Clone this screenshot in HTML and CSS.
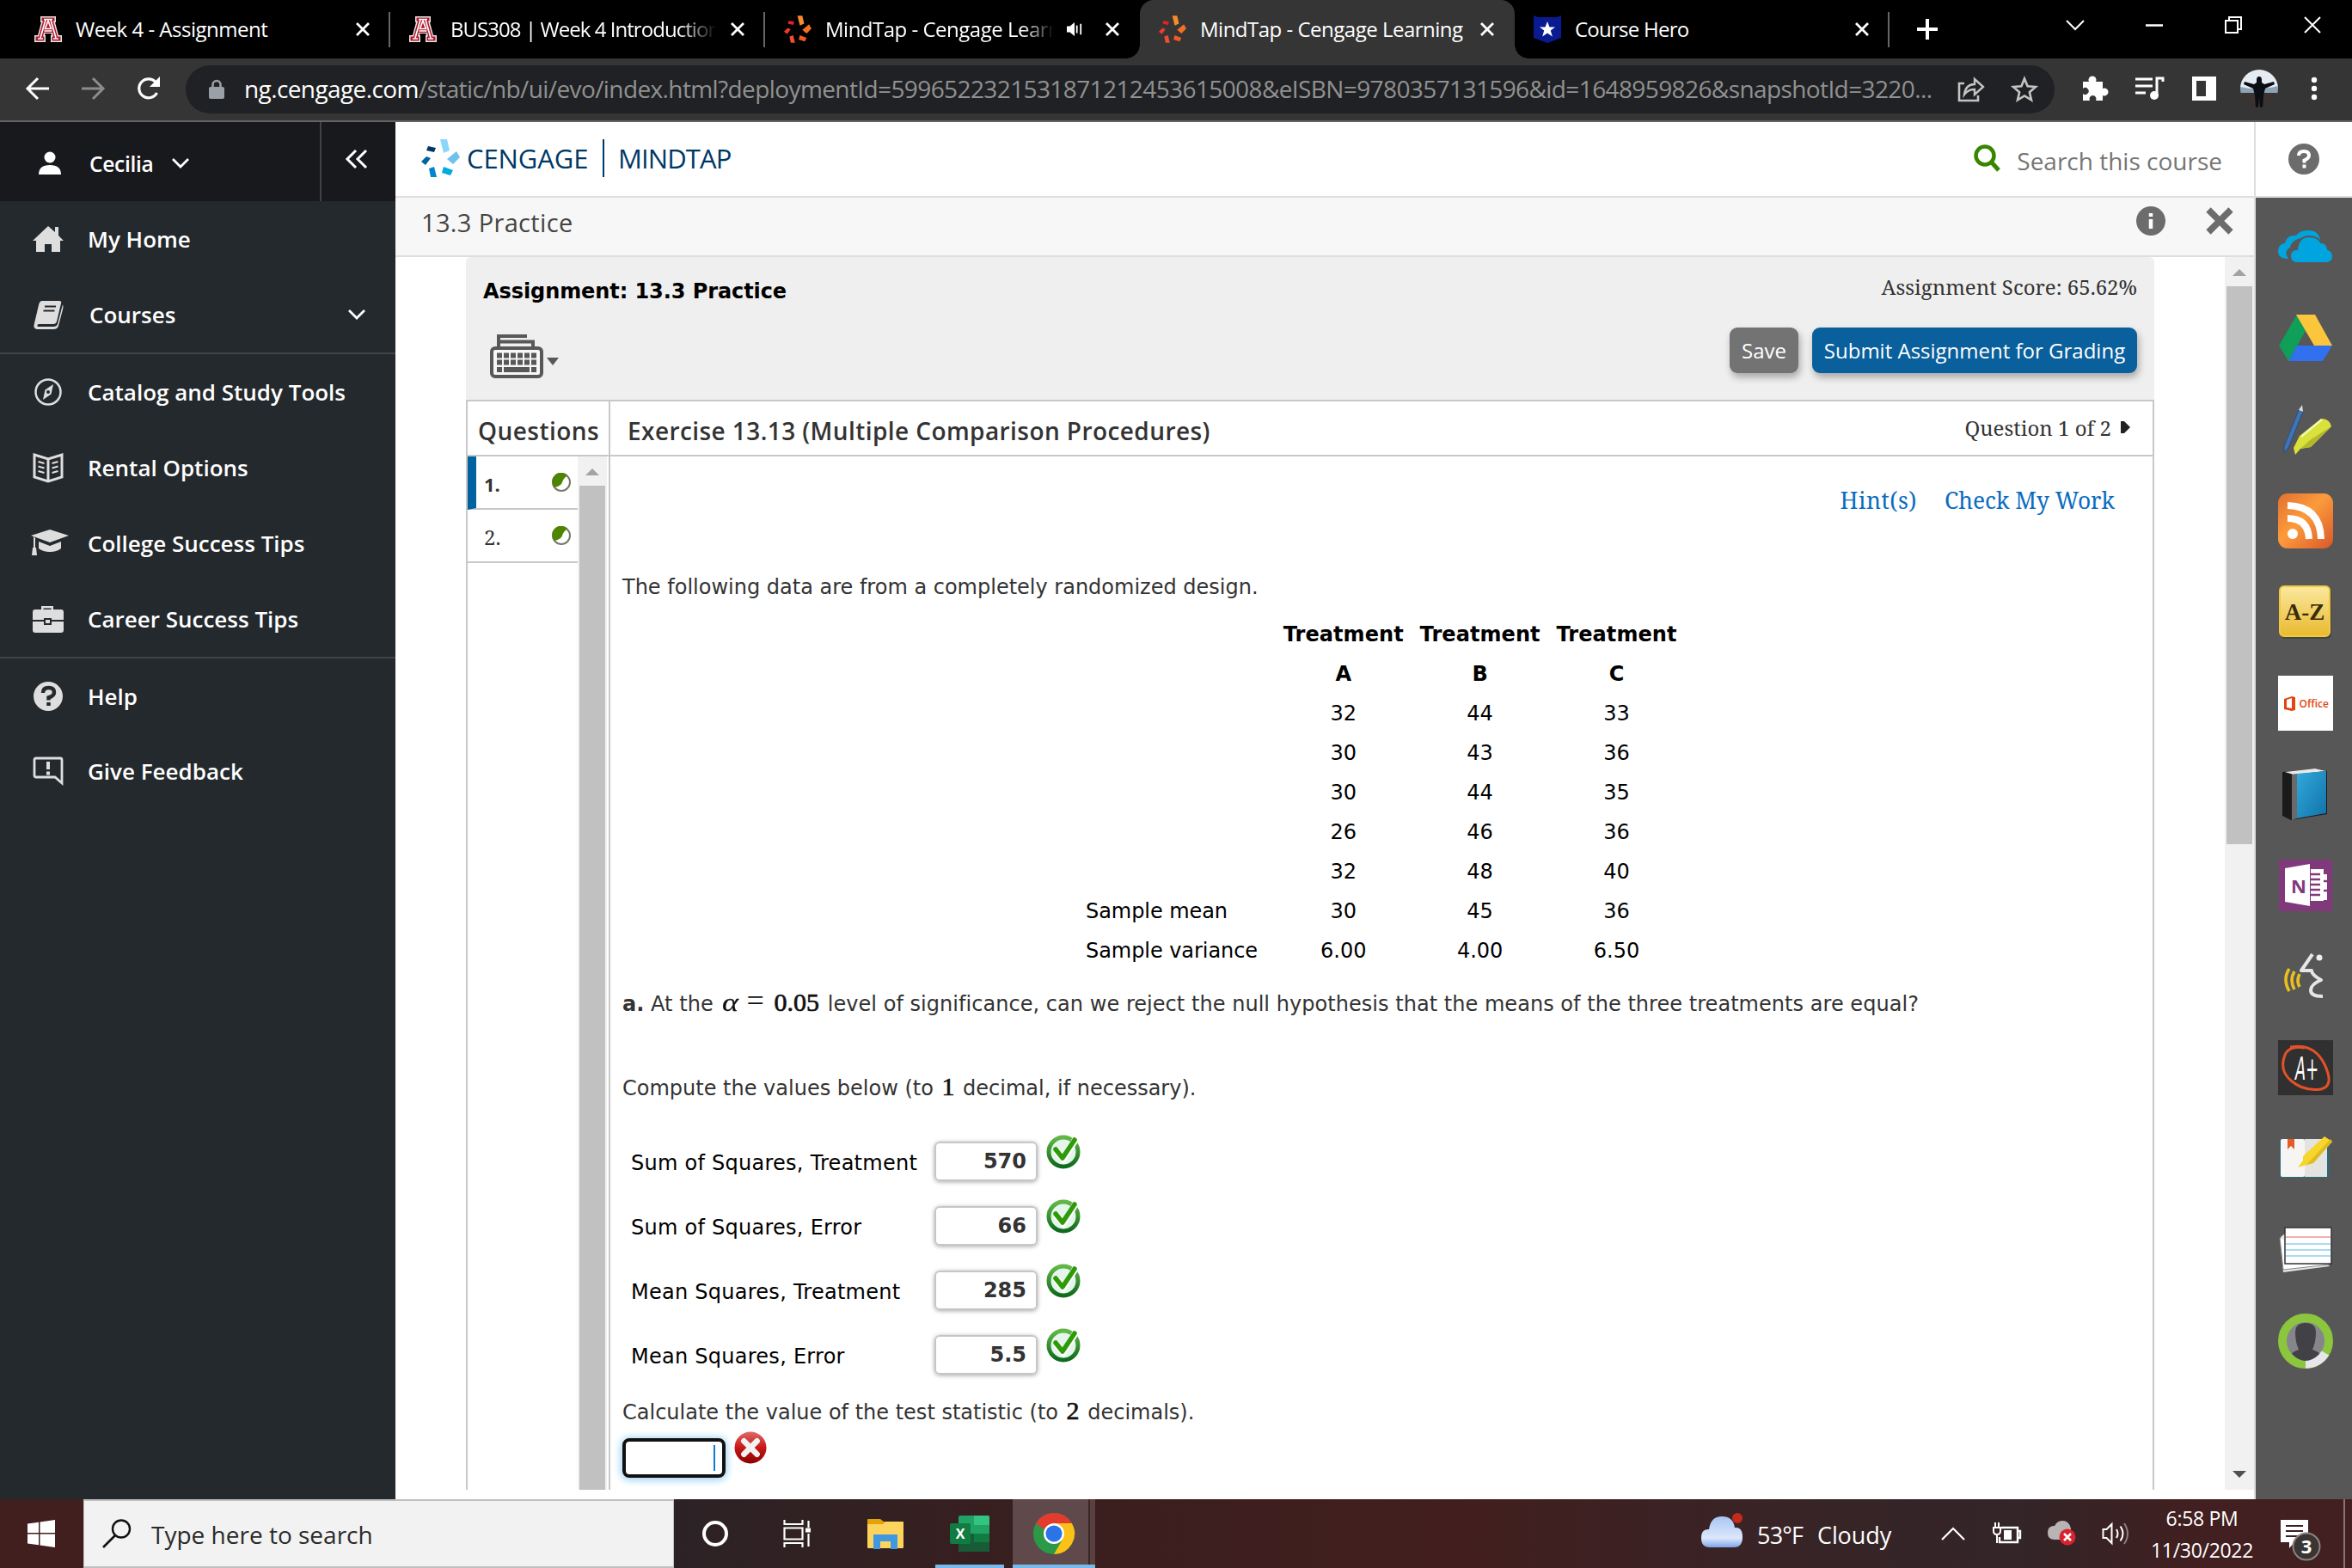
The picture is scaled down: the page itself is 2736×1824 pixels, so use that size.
FILE: index.html
```html
<!DOCTYPE html>
<html lang="en">
<head>
<meta charset="utf-8">
<title>MindTap - Cengage Learning</title>
<link rel="stylesheet" href="styles.css">
</head>
<body>
<svg class="defs" aria-hidden="true">
  <defs>
    <linearGradient id="gOrange" x1="0" y1="0" x2="1" y2="1"><stop offset="0" stop-color="#e2702f"/><stop offset=".45" stop-color="#fc9b3c"/><stop offset="1" stop-color="#d8572a"/></linearGradient>
    <linearGradient id="gGold" x1="0" y1="0" x2="0" y2="1"><stop offset="0" stop-color="#fbe9a0"/><stop offset="1" stop-color="#e9b92f"/></linearGradient>
    <linearGradient id="gBook" x1="0" y1="0" x2="1" y2="1"><stop offset="0" stop-color="#31a9dc"/><stop offset="1" stop-color="#1272a8"/></linearGradient>
    <linearGradient id="gOk" x1="0" y1="0" x2="0" y2="1"><stop offset="0" stop-color="#62b847"/><stop offset="1" stop-color="#0f6a1c"/></linearGradient>
    <linearGradient id="gBad" x1="0" y1="0" x2="0" y2="1"><stop offset="0" stop-color="#e06a6a"/><stop offset=".5" stop-color="#c81818"/><stop offset="1" stop-color="#8c0000"/></linearGradient>
    <linearGradient id="gCloud" x1="0" y1="0" x2="0" y2="1"><stop offset="0" stop-color="#a9c4f3"/><stop offset=".7" stop-color="#dce8fb"/><stop offset="1" stop-color="#7ea4ea"/></linearGradient>
  </defs>
  <symbol id="uofa" viewBox="0 0 32 30"><path fill="#e8e8e8" d="M7 0h18v7h-1l4 15h4v8H19v-8h1l-.5-2h-7l-.5 2h1v8H0v-8h4L8 7H7z"/><path fill="#b0182b" d="M8.5 1.500h15v4h-1.500l5 18h3.500v5H20.500v-5h1.500l-1-4.500H11l-1 4.500h1.500v5H1.500v-5H5l5-18H8.500z"/><path fill="none" stroke="#fff" stroke-width="1.700" d="M11 3.500h10M4 26h6M22 26h6M7 25l6-21M25 25L19 4M11.500 17h9M12.500 14.500L16 5l3.500 9.500z"/></symbol>
  <symbol id="burst" viewBox="0 0 45 44"><path class="b1" d="M22 0h8l3 13-7 3z"/><path class="b2" d="M30 23l11-9 4 7-8 8z"/><path class="b3" d="M26 32l11 4-3 6-10-3z"/><path class="b4" d="M9 34l6-2 3 12h-7z"/><path class="b5" d="M0 26l6-6 5 2-6 8z"/><path class="b6" d="M8 8l9 2-2 5-9-2z"/></symbol>
  <symbol id="x" viewBox="0 0 18 18"><path d="M2 2l14 14M16 2L2 16" fill="none" stroke="currentColor" stroke-width="2.800"/></symbol>
  <symbol id="check" viewBox="0 0 40 40"><circle cx="20" cy="20" r="17" fill="#e4f6ec" stroke="url(#gOk)" stroke-width="5"/><path d="M11 18l9 10L35 4" fill="none" stroke="#fff" stroke-width="8"/><path d="M11 17l8 10L33 6" fill="none" stroke="#2f9a08" stroke-width="5.500" stroke-linecap="round" stroke-linejoin="round"/></symbol>
  <symbol id="half" viewBox="0 0 22 22"><circle cx="11" cy="11" r="10" fill="#fff" stroke="#77776a" stroke-width="2"/><path d="M18 3A10 10 0 0 0 3 17Q11 15 12 11T18 3z" fill="#4f8400"/></symbol>
</svg>

<header class="tabs">
  <div class="tab"><svg class="fav"><use href="#uofa"/></svg><span class="tt">Week 4 - Assignment</span><svg class="tx"><use href="#x"/></svg></div>
  <div class="tab"><svg class="fav"><use href="#uofa"/></svg><span class="tt fade">BUS308 | Week 4 Introduction</span><svg class="tx"><use href="#x"/></svg></div>
  <div class="tab noline"><svg class="fav orange"><use href="#burst"/></svg><span class="tt fade">MindTap - Cengage Learn</span><svg class="snd" viewBox="0 0 20 20"><path d="M0 6h4l6-5v18l-6-5H0z" fill="#fff"/><path d="M13 5v10M18 3v14" stroke="#fff" stroke-width="2"/></svg><svg class="tx"><use href="#x"/></svg></div>
  <div class="tab active"><svg class="fav orange"><use href="#burst"/></svg><span class="tt">MindTap - Cengage Learning</span><svg class="tx"><use href="#x"/></svg></div>
  <div class="tab"><svg class="fav" viewBox="0 0 32 32"><path d="M0 0l5 2h22l5-2v26L16 32 0 26z" fill="#0a1b92"/><path d="M16 7l2.500 6.500h6.500l-5.200 4 2 7L16 20.500 10.200 24.500l2-7-5.200-4h6.500z" fill="#fff"/></svg><span class="tt hero">Course Hero</span><svg class="tx"><use href="#x"/></svg></div>
  <div class="newtab"><svg width="24" height="24"><path d="M12 0v24M0 12h24" stroke="#fff" stroke-width="4"/></svg></div>
  <div class="winctl">
    <span><svg width="22" height="12"><path d="M1 1l10 10L21 1" fill="none" stroke="#fff" stroke-width="2"/></svg></span>
    <span><svg width="20" height="3"><path d="M0 1.500h20" stroke="#fff" stroke-width="2.500"/></svg></span>
    <span><svg width="20" height="20"><path d="M1 5h14v14H1zM5 5V1h14v14h-4" fill="none" stroke="#fff" stroke-width="2"/></svg></span>
    <span><svg width="20" height="20"><path d="M1 1l18 18M19 1L1 19" stroke="#fff" stroke-width="2"/></svg></span>
  </div>
</header>

<div class="toolbar">
  <span class="tb"><svg width="28" height="26"><path d="M14 1L2 13l12 12M2 13h25" fill="none" stroke="#fff" stroke-width="3"/></svg></span>
  <span class="tb"><svg width="28" height="26"><path d="M14 1l12 12-12 12M26 13H1" fill="none" stroke="#8c8c8c" stroke-width="3"/></svg></span>
  <span class="tb"><svg width="28" height="28"><path d="M24.500 19A11 11 0 1 1 23 6.500" fill="none" stroke="#fff" stroke-width="3.200"/><path d="M28 0v12H16z" fill="#fff"/></svg></span>
  <div class="url">
    <svg class="lock" width="18" height="22"><rect x="0" y="8" width="18" height="14" rx="2" fill="#9aa0a6"/><path d="M4.500 9V5.500a4.500 4.500 0 0 1 9 0V9" fill="none" stroke="#9aa0a6" stroke-width="2.600"/></svg>
    <span class="addr"><b>ng.cengage.com</b>/static/nb/ui/evo/index.html?deploymentId=5996522321531871212453615008&amp;eISBN=9780357131596&amp;id=1648959826&amp;snapshotId=3220...</span>
    <svg width="32" height="30"><path d="M8 8H2v20h22v-6" fill="none" stroke="#c4c4c4" stroke-width="2.600"/><path d="M8 21c1-8 5-12 12-12V3l10 9-10 9v-6c-6 0-9 2-12 6z" fill="none" stroke="#c4c4c4" stroke-width="2.400"/></svg>
    <svg class="star" width="30" height="30"><path d="M15 2.500l3.600 8.700 9.400.8-7.100 6.200 2.100 9.200L15 22.500 7 27.400l2.100-9.200L2 12l9.400-.8z" fill="none" stroke="#c4c4c4" stroke-width="2.600"/></svg>
  </div>
  <span class="tb"><svg width="30" height="30"><path d="M2 7h7a4.500 4.500 0 1 1 8 0h8v8a4.500 4.500 0 1 1 0 8v6h-8a4 4 0 1 0-7 0H2v-8a4 4 0 1 0 0-6z" fill="#fff"/></svg></span>
  <span class="tb"><svg width="32" height="28"><path d="M0 3h20M0 11h20M0 19h12" stroke="#fff" stroke-width="3"/><path d="M25 22V2h7v4" fill="none" stroke="#fff" stroke-width="3"/><circle cx="22" cy="22" r="5" fill="#fff"/></svg></span>
  <span class="tb"><svg width="28" height="28"><path d="M0 0h28v28H0zM5 5v18h11V5z" fill="#fff" fill-rule="evenodd"/></svg></span>
  <span class="tb"><svg width="44" height="44"><clipPath id="av"><circle cx="22" cy="22" r="22"/></clipPath><g clip-path="url(#av)"><rect width="44" height="22" fill="#e6edf2"/><path d="M0 20q20 5 44-1v10H0z" fill="#8ba4b6"/><rect y="27" width="44" height="17" fill="#3a3331"/><path d="M22 8q3 0 3 4v3l3 2 11-3 1 3-11 5-2 8-1 14h-3l-1-12-1 12h-3l-1-14-2-8-11-5 1-3 11 3 3-2v-3q0-4 3-4z" fill="#0b0d14"/></g></svg></span>
  <span class="tb"><svg width="8" height="28"><circle cx="4" cy="4" r="3.200" fill="#fff"/><circle cx="4" cy="14" r="3.200" fill="#fff"/><circle cx="4" cy="24" r="3.200" fill="#fff"/></svg></span>
</div>

<main class="page">
  <nav class="side">
    <div class="user">
      <div class="who"><svg class="ni" viewBox="0 0 40 40"><circle cx="22" cy="13" r="6.500" fill="#fff"/><path d="M9 33q0-11 13-11t13 11z" fill="#fff"/></svg><span class="cec">Cecilia</span><svg width="22" height="14"><path d="M2 2l9 9 9-9" fill="none" stroke="#fff" stroke-width="2.800"/></svg></div>
      <div class="fold"><svg width="28" height="24"><path d="M13 2L3 12l10 10M25 2L15 12l10 10" fill="none" stroke="#fff" stroke-width="3"/></svg></div>
    </div>
    <div class="grp">
      <div class="nav"><svg class="ni" viewBox="0 0 40 40"><path d="M20 5L2 22h4v13h10v-9h8v9h10V22h4l-6-6V6h-4v6z" fill="#dedede"/></svg><span>My Home</span></div>
      <div class="nav"><svg class="ni" viewBox="0 0 40 40"><path d="M13 4h20q3 0 2 3l-5 21q-1 3-4 3H10q-4 0-2 3h18q4 0 5-3l6-23q1 3 0 6l-5 19q-1 4-6 4H7q-5-1-3-7l5-21q1-5 4-5z" fill="#dedede"/><path d="M16 10.500h13M14.500 15.500h13" stroke="#24292d" stroke-width="2.200"/></svg><span class="crs">Courses</span><svg class="more" width="22" height="14"><path d="M2 2l9 9 9-9" fill="none" stroke="#fff" stroke-width="2.800"/></svg></div>
    </div>
    <div class="grp g2">
      <div class="nav"><svg class="ni" viewBox="0 0 40 40"><circle cx="20" cy="20" r="14.500" fill="none" stroke="#dedede" stroke-width="2.500"/><path d="M26 11l-2.500 11.500L14 29l2.500-11.500z" fill="#dedede"/><circle cx="20" cy="20" r="2" fill="#24292d"/></svg><span>Catalog and Study Tools</span></div>
      <div class="nav"><svg class="ni" viewBox="0 0 40 40"><path d="M4 5l16 5 16-5v26l-16 5-16-5zM20 10v26" fill="none" stroke="#dedede" stroke-width="3"/><path d="M8.500 13l7 2M8.500 18.500l7 2M8.500 24l7 2M31.500 13l-7 2M31.500 18.500l-7 2M31.500 24l-7 2" stroke="#dedede" stroke-width="2"/></svg><span>Rental Options</span></div>
      <div class="nav"><svg class="ni cap" viewBox="0 0 48 40"><path d="M25 4l22 7-22 8L3 11z" fill="#dedede"/><path d="M12 18l13 5 13-5v8q-5 4-13 4t-13-4zM6 12v13H5l-1 9h6l-1-9H8V14z" fill="#dedede"/></svg><span>College Success Tips</span></div>
      <div class="nav"><svg class="ni" viewBox="0 0 40 40"><path d="M12 9V5h14v4h9q3 0 3 3v9H24v-2h-9v2H2v-9q0-3 3-3zM14.500 9h9V7.500h-9zM2 23h13v4h9v-4h14v10q0 3-3 3H5q-3 0-3-3zM17 21h5v4h-5z" fill="#dedede" fill-rule="evenodd"/></svg><span>Career Success Tips</span></div>
    </div>
    <div class="grp g3">
      <div class="nav"><svg class="ni" viewBox="0 0 40 40"><circle cx="20" cy="20" r="17" fill="#dedede"/><path d="M14 16q0-6 6.500-6t6.500 5.500q0 4-6.500 6v3M20.500 27v4" fill="none" stroke="#24292d" stroke-width="4.500"/></svg><span>Help</span></div>
      <div class="nav"><svg class="ni" viewBox="0 0 40 40"><path d="M6 5h28q2 0 2 2v27l-8-7H6q-2 0-2-2V7q0-2 2-2z" fill="none" stroke="#dedede" stroke-width="2.800"/><path d="M20 9v9M20 20.500v4" stroke="#dedede" stroke-width="4"/></svg><span>Give Feedback</span></div>
    </div>
  </nav>

  <section class="center">
    <header class="brand">
      <svg class="logo"><use href="#burst"/></svg><span class="cg">CENGAGE</span><i></i><span class="mt">MINDTAP</span>
      <div class="search"><svg width="32" height="32"><circle cx="13" cy="13" r="10.500" fill="none" stroke="#388600" stroke-width="4.500"/><path d="M20 20l9 10" stroke="#388600" stroke-width="5"/></svg><span>Search this course</span></div>
    </header>
    <div class="crumb"><span>13.3 Practice</span>
      <svg width="34" height="34"><circle cx="17" cy="17" r="17" fill="#6c6c6c"/><path d="M17 8v4M17 15v11" stroke="#fff" stroke-width="4.500"/></svg>
      <svg class="cx" width="32" height="32"><path d="M3 3l26 26M29 3L3 29" stroke="#6c6c6c" stroke-width="7.500"/></svg>
    </div>
    <div class="frame">
      <div class="sheet">
        <div class="ahead">
          <div class="row1"><h1>Assignment: 13.3 Practice</h1><span class="score">Assignment Score: 65.62%</span></div>
          <div class="row2">
            <svg width="84" height="54"><path d="M10 16V3h33M10 9.500h40v8" fill="none" stroke="#585858" stroke-width="4"/><rect x="2" y="17" width="58" height="33" rx="4" fill="#f7f7f7" stroke="#585858" stroke-width="4"/><path d="M8 25.500h46M8 33.500h46" stroke="#585858" stroke-width="6" stroke-dasharray="6 2"/><path d="M8 42h6M16 42h30M48 42h6" stroke="#585858" stroke-width="6"/><path d="M66 28h14l-7 9z" fill="#585858"/></svg>
            <button class="btn save">Save</button><button class="btn">Submit Assignment for Grading</button>
          </div>
        </div>
        <div class="qa">
          <aside class="qlist">
            <h2>Questions</h2>
            <div class="qbody">
              <div class="qs">
                <div class="q on"><span>1.</span><svg class="ball"><use href="#half"/></svg></div>
                <div class="q"><span>2.</span><svg class="ball"><use href="#half"/></svg></div>
              </div>
              <div class="sb"><svg width="32" height="34"><path d="M8 22l8-8 8 8z" fill="#a3a3a3"/></svg><div class="thumb"></div></div>
            </div>
          </aside>
          <article class="ex">
            <div class="exh"><h2>Exercise 13.13 (Multiple Comparison Procedures)</h2><span>Question 1 of 2</span><svg width="12" height="16"><path d="M0 1l4 0 7 7-7 7-4 0z" fill="#222"/></svg></div>
            <div class="body">
              <div class="links"><a class="hint">Hint(s)</a><a>Check My Work</a></div>
              <p class="p1">The following data are from a completely randomized design.</p>
              <table>
                <tr><th></th><th>Treatment</th><th>Treatment</th><th>Treatment</th></tr>
                <tr><th></th><th>A</th><th>B</th><th>C</th></tr>
                <tr><td></td><td>32</td><td>44</td><td>33</td></tr>
                <tr><td></td><td>30</td><td>43</td><td>36</td></tr>
                <tr><td></td><td>30</td><td>44</td><td>35</td></tr>
                <tr><td></td><td>26</td><td>46</td><td>36</td></tr>
                <tr><td></td><td>32</td><td>48</td><td>40</td></tr>
                <tr><td>Sample mean</td><td>30</td><td>45</td><td>36</td></tr>
                <tr><td>Sample variance</td><td>6.00</td><td>4.00</td><td>6.50</td></tr>
              </table>
              <p class="p2"><b>a.</b> At the <span class="m"><em>α</em><s>=</s>0.05</span> level of significance, can we reject the null hypothesis that the means of the three treatments are equal?</p>
              <p class="p3">Compute the values below (to <span class="m">1</span> decimal, if necessary).</p>
              <div class="ans">
                <div class="a"><label>Sum of Squares, Treatment</label><div class="in">570</div><svg class="ok"><use href="#check"/></svg></div>
                <div class="a"><label>Sum of Squares, Error</label><div class="in">66</div><svg class="ok"><use href="#check"/></svg></div>
                <div class="a"><label>Mean Squares, Treatment</label><div class="in">285</div><svg class="ok"><use href="#check"/></svg></div>
                <div class="a"><label>Mean Squares, Error</label><div class="in">5.5</div><svg class="ok"><use href="#check"/></svg></div>
              </div>
              <p class="p4">Calculate the value of the test statistic (to <span class="m">2</span> decimals).</p>
              <div class="last"><div class="in focus"><i></i></div><svg width="38" height="38" viewBox="0 0 40 40"><circle cx="20" cy="20" r="19.500" fill="url(#gBad)"/><path d="M12 12l16 16M28 12L12 28" stroke="#f2f2f2" stroke-width="7" stroke-linecap="round"/></svg></div>
            </div>
          </article>
        </div>
      </div>
      <div class="sb main"><svg width="34" height="34"><path d="M9 22l8-8 8 8z" fill="#a3a3a3"/></svg><div class="thumb"></div><svg class="dn" width="34" height="34"><path d="M9 12h16l-8 8z" fill="#505050"/></svg></div>
    </div>
  </section>

  <aside class="rail">
    <div class="help"><svg width="36" height="36"><circle cx="18" cy="18" r="18" fill="#6c6c6c"/><path d="M12 14q0-5 6-5t6 5q0 3-5.500 5.500v3M18.500 24.500v4" fill="none" stroke="#fff" stroke-width="4"/></svg></div>
    <div class="apps">
      <span><svg viewBox="0 0 64 64"><g transform="translate(0 4)"><path d="M12 41q-12 0-12-9 0-8 8-9 2-10 13-9 4-6 14-6 12 0 14 11-6-3-12 0-6-4-14-1-8 3-9 10-8 4-2 13z" fill="#00a5e0"/><path d="M22 46q-8 0-8-8t8-8q2-15 14-15 10 0 14 7 7 0 8 8 6 2 6 8 0 8-8 8z" fill="#00a5e0" stroke="#575757" stroke-width="2"/></g></svg></span>
      <span><svg viewBox="0 0 64 64"><path d="M22 4l11 17-21 37L1 40z" fill="#0f9f58"/><path d="M21 4h22l20 36H42z" fill="#fbc63b"/><path d="M22 40h41L52 58H12z" fill="#3170ee"/></svg></span>
      <span><svg viewBox="0 0 64 64"><path d="M24 9l5 2L12 53l-5 6 0-8z" fill="#3f74b5" stroke="#2c4d7c"/><path d="M24 9l4-6 1 8z" fill="#ddd"/><path d="M25 39L50 19q10 0 12 9L38 52l-12 2-6 7-2-8z" fill="#d9e23a"/><path d="M62 28L38 52l-12 2 11-10z" fill="#b3b92b"/><path d="M27 40L51 20" stroke="#f6facb" stroke-width="2"/></svg></span>
      <span><svg viewBox="0 0 64 64"><rect width="64" height="64" rx="11" fill="url(#gOrange)"/><circle cx="17" cy="47" r="6" fill="#fff"/><path d="M11 29q24 0 25 24M11 14q38 1 39 39" fill="none" stroke="#fff" stroke-width="8"/></svg></span>
      <span><svg viewBox="0 0 64 64"><rect x="3" y="4" width="59" height="59" rx="5" fill="#444"/><rect x="2" y="2" width="58" height="58" rx="5" fill="url(#gGold)" stroke="#f0c93c" stroke-width="2"/><text x="31" y="41" class="az">A-Z</text></svg></span>
      <span><svg viewBox="0 0 64 64"><rect width="64" height="64" fill="#fff"/><path d="M7 27l9-3 4 1v15l-4 1-9-2zM10 28v9l6 1V26z" fill="#e2450e" fill-rule="evenodd"/><text x="24.500" y="37" class="off">Office</text></svg></span>
      <span><svg viewBox="0 0 64 64"><path d="M5 6l38-4 14 3v50l-42 7-10-5z" fill="#1a1a1a"/><path d="M8 6l35-4 13 3-38 4z" fill="#e9e9e9"/><path d="M22 8l34-3v49l-34 6z" fill="url(#gBook)"/><path d="M16 9l6-1v52l-6 2z" fill="#6a6a6a"/></svg></span>
      <span><svg viewBox="0 0 64 64"><rect x="1" y="2" width="62" height="60" fill="#80397b"/><path d="M8 12l29-5v49L8 51z" fill="#fff"/><path d="M38 13h15v6h4v30h-4v1H38z" fill="#fff"/><path d="M38 19h11M38 25h11M38 31h11M38 37h11M38 43h11M53 27h5M53 38h5" stroke="#80397b" stroke-width="2.400"/><text x="15" y="41" class="on">N</text></svg></span>
      <span><svg viewBox="0 0 64 64"><path d="M40 6L27 25h12q0 5 11 11-12 5-12 12 0 7 14 7" fill="none" stroke="#e6e6e6" stroke-width="4" stroke-linejoin="round"/><circle cx="48" cy="10" r="3.500" fill="#eee"/><path d="M13 23q-8 12 0 26M19 26q-6 10 0 21M25 29q-4 8 0 15" fill="none" stroke="#e8c020" stroke-width="3.600"/></svg></span>
      <span><svg viewBox="0 0 64 64"><rect width="64" height="64" fill="#303030"/><path d="M14 8q28-5 40 20t-4 29Q30 60 15 47T9 15q6-9 22-6" fill="none" stroke="#e2512a" stroke-width="3"/><text x="20" y="46" class="ap" textLength="27" lengthAdjust="spacingAndGlyphs">A+</text></svg></span>
      <span><svg viewBox="0 0 64 64"><rect x="2" y="9" width="57" height="45" rx="3" fill="#246e80"/><rect x="3" y="9" width="28" height="44" rx="2" fill="#f7f5f3"/><rect x="31" y="9" width="26" height="44" fill="#e3e3df"/><path d="M11 9h8v12l-4-4-4 4z" fill="#e45b27"/><path d="M29 29L54 6l9 6-22 25-8 2-10 3 6-8z" fill="#f8d52a"/><path d="M63 12L41 37l-8 2 28-30z" fill="#dfba23"/></svg></span>
      <span><svg viewBox="0 0 64 64"><path d="M3 17l5-4 52 38L6 58z" fill="#e5e5e5"/><path d="M2 18l4 37 54-6" fill="#fff" stroke="#888"/><rect x="8" y="6" width="54" height="42" fill="#fff" stroke="#333" stroke-width="1.500"/><path d="M9 17h52" stroke="#f09595" stroke-width="1.500"/><path d="M9 25h52M9 32h52M9 39h52" stroke="#8fd0ef" stroke-width="1.500"/></svg></span>
      <span><svg viewBox="0 0 64 64"><circle cx="32" cy="32" r="27" fill="#85858c" stroke="#8bc63e" stroke-width="10"/><path d="M32 59A27 27 0 0 0 55 46" fill="none" stroke="#e6e6ea" stroke-width="10"/><path d="M20 22q0-11 12-11t12 11-4 20q8 3 8 5-16 16-32 0 0-2 8-5-4-9-4-20z" fill="#414146"/></svg></span>
    </div>
  </aside>
</main>

<footer class="task">
  <div class="start"><svg width="32" height="32"><path d="M0 4.500L13 2.700V15H0zM14.500 2.400L32 0v15H14.500zM0 16.500h13v12.800L0 27.500zM14.500 16.500H32V32l-17.500-2.400z" fill="#fff"/></svg></div>
  <div class="find"><svg width="34" height="34"><circle cx="22" cy="11.500" r="10" fill="none" stroke="#111" stroke-width="2.400"/><path d="M15 19L1 33" stroke="#111" stroke-width="2.600"/></svg><span>Type here to search</span></div>
  <div class="ti"><svg width="32" height="32"><circle cx="16" cy="16" r="13" fill="none" stroke="#fff" stroke-width="4"/></svg></div>
  <div class="ti"><svg width="34" height="32"><path d="M1.500 0v5h21V0M1.500 32v-5h21v5M1.500 9.500h21v13h-21zM29.500 1v8M29.500 16v15" fill="none" stroke="#fff" stroke-width="2.200"/><path d="M26 9.500h6v5h-6z" fill="#fff"/></svg></div>
  <div class="ti wide"><svg width="44" height="36"><path d="M1 2q0-1 1-1h14l4 3h22q1 0 1 1v29H1z" fill="#e3a10c"/><path d="M1 7h18l3-3h20q1 0 1 1v29q0 1-1 1H2q-1 0-1-1z" fill="#fcd35c"/><path d="M8 19h28v17h-8v-9h-12v9H8z" fill="#3f98e0"/></svg></div>
  <div class="ti xl"><svg width="48" height="44"><rect x="11" y="1" width="36" height="42" rx="2" fill="#21a366"/><path d="M29 1h16q2 0 2 2v9H29z" fill="#33c481"/><path d="M11 22h36v19q0 2-2 2H13q-2 0-2-2z" fill="#185c37"/><path d="M29 22h18v10H29z" fill="#107c41"/><rect x="1" y="10" width="24" height="24" rx="2" fill="#107c41"/><text x="13" y="28" class="xt">X</text></svg></div>
  <div class="ti chrome"><svg width="48" height="48" viewBox="0 0 48 48"><circle cx="24" cy="24" r="24" fill="#2a9a48"/><path d="M24 24L3.200 12A24 24 0 0 1 44.800 12z" fill="#e33b2e"/><path d="M24 12h20.800A24 24 0 0 1 24 48L34.400 30z" fill="#fbc116"/><path d="M3.200 12L13.600 30 24 12z" fill="#e33b2e"/><path d="M3.200 12L13.600 30 20 34 14 20z" fill="#2a9a48"/><circle cx="24" cy="24" r="12" fill="#fff"/><circle cx="24" cy="24" r="9.500" fill="#2b74e8"/></svg></div>
  <div class="tray">
    <svg class="cl" width="50" height="46"><path d="M10 40Q0 40 0 29t9-10q2-15 15-15t15 13q9-1 9 11t-10 12z" fill="url(#gCloud)"/><circle cx="42" cy="6" r="6" fill="#c42b1c"/></svg>
    <span class="wx">53°F</span><span class="wx wc">Cloudy</span>
    <svg class="up" width="28" height="16"><path d="M1 15L14 2l13 13" fill="none" stroke="#fff" stroke-width="2.200"/></svg>
    <svg class="bt" width="34" height="26"><path d="M10 6h19v17H8v-6M29 10h3v8h-3" fill="none" stroke="#fff" stroke-width="2.400"/><path d="M13 9h9v11H13z" fill="#fff"/><path d="M0 5h10v5q0 5-5 5t-5-5zM2 0h2v5H2zM6 0h2v5H6zM4 14h2v10H4z" fill="#fff"/><path d="M2 7h6v3q0 3-3 3t-3-3z" fill="#3b2226"/></svg>
    <svg class="od" width="34" height="30"><path d="M8 22q-8 0-8-8t8-8q3-6 9-6 8 0 10 9v13z" fill="#b9b4b4"/><circle cx="23" cy="19" r="9.500" fill="#d8232e"/><path d="M19 15l8 8M27 15l-8 8" stroke="#fff" stroke-width="2.500"/></svg>
    <svg class="sp" width="34" height="30"><path d="M1.500 10h4l6-6v22l-6-6h-4zM17 10q3 5 0 10M21.500 6.500q6 8.500 0 17" fill="none" stroke="#fff" stroke-width="2"/><path d="M26 3q8 12 0 24" fill="none" stroke="#8d7f7f" stroke-width="2"/></svg>
    <div class="clock"><span>6:58 PM</span><span class="dt">11/30/2022</span></div>
    <div class="note"><svg width="48" height="48"><path d="M0 0h32v26H16l-6 7v-7H0z" fill="#fff"/><path d="M6 7h20M6 13h20M6 19h14" stroke="#3b2022" stroke-width="2.200"/><circle cx="30" cy="31" r="15.500" fill="#3a3432" stroke="#8a8482" stroke-width="2"/><text x="30" y="39" class="n3">3</text></svg></div>
  </div>
</footer>
</body>
</html>
```
FILE: styles.css
```css
*{box-sizing:border-box}
body{margin:0;width:2736px;height:1824px;overflow:hidden;display:flex;flex-direction:column;background:#fff;font-family:"Open Sans","Noto Sans",sans-serif;color:#333}
svg{display:block;flex:none;overflow:visible}
.defs{position:absolute;width:0;height:0;overflow:hidden}
h1,h2,p{margin:0}

.tabs{display:flex;height:68px;background:#000;padding-left:18px;color:#fff}
.tab{width:436px;height:68px;display:flex;align-items:center;padding:0 23px 0 22px;font-size:24px;letter-spacing:-.5px;white-space:nowrap;background:linear-gradient(#666,#666) right 14px/2px 41px no-repeat}
.tab.noline{background:none}
.tab.active{background:#353535;border-radius:16px 16px 0 0;position:relative}
.tab.active::before,.tab.active::after{content:"";position:absolute;bottom:0;width:16px;height:16px}
.tab.active::before{left:-16px;background:radial-gradient(circle at 0 0,#000 15.500px,#353535 16px)}
.tab.active::after{right:-16px;background:radial-gradient(circle at 100% 0,#000 15.500px,#353535 16px)}
.fav{width:32px;height:32px;margin-right:16px}
.tt{flex:1;line-height:40px}
.hero{letter-spacing:-.75px}
.fade{width:309px;flex:none;letter-spacing:-.95px;margin-right:auto;-webkit-mask-image:linear-gradient(90deg,#000 86%,transparent);mask-image:linear-gradient(90deg,#000 86%,transparent)}
.noline .fade{width:266px;letter-spacing:-.5px}
.tx{width:18px;height:18px}
.snd{width:18px;height:20px;margin-right:26px}
.newtab{width:88px;display:flex;align-items:center;justify-content:center}
.winctl{margin-left:auto;display:flex;height:58px}
.winctl span{width:92px;display:flex;align-items:center;justify-content:center}

.b1{fill:var(--c1,#8ad7fb)}.b2{fill:var(--c2,#6fc3ea)}.b3{fill:var(--c3,#00a9e0)}.b4{fill:var(--c4,#0086cd)}.b5{fill:var(--c5,#00629f)}.b6{fill:var(--c6,#003865)}
.orange{--c1:#f98a2b;--c2:#f36f21;--c3:#f15a24;--c4:#f04e30;--c5:#ee3b2c;--c6:#e32227}

.toolbar{display:flex;align-items:center;height:74px;background:#353535;border-bottom:2px solid #666263;padding:0 12px 2px 12px}
.tb{width:64px;height:72px;display:flex;align-items:center;justify-content:center}
.url{flex:1;height:56px;margin:2px 14px 0 12px;border-radius:28px;background:#202124;display:flex;align-items:center;padding:0 20px 0 27px}
.addr{flex:1;margin-left:23px;font-size:28px;letter-spacing:-.6px;line-height:54px;height:56px;color:#919191;white-space:nowrap}
.addr b{font-weight:400;color:#fff}
.star{margin-left:31px}

.page{display:flex;height:1602px}
.side{width:460px;background:#24292d;color:#fff;font-weight:600;font-size:26px}
.user{display:flex;height:92px;background:#18191d}
.who{width:374px;border-right:2px solid #3f4246;display:flex;align-items:center;padding:4px 0 0 36px}
.cec{margin-left:28px;width:95px;font-size:24.500px;letter-spacing:-.3px}
.fold{width:86px;display:flex;justify-content:center;padding-top:31px}
.fold svg{margin-right:5px}
.grp{border-bottom:2px solid #404347;height:178px}
.g2{height:354px}
.g3{border:0}
.nav{height:88px;display:flex;align-items:center;padding:0 34px 0 36px}
.g3 .nav{height:87px}
.nav span{margin-left:26px}
.nav .crs{margin-left:28px}
.ni{width:40px;height:40px}
.cap{width:48px;margin:0 -5px 0 -3px}
.more{margin-left:auto}

.center{width:2164px;border-right:2px solid #dedede;display:flex;flex-direction:column}
.brand{height:88px;border-bottom:2px solid #dedede;display:flex;align-items:center;padding:0 37px 2px 30px;color:#003865;font-size:31px}
.logo{width:45px;height:44px;margin-right:8px}
.cg{width:158px;letter-spacing:-.1px}
.brand i{width:2px;height:44px;background:#003865;margin-right:16px}
.mt{letter-spacing:-.9px}
.search{margin-left:auto;display:flex;align-items:center;gap:18px;color:#757575;font-size:28px}
.search span{padding-top:5px}
.crumb{height:69px;background:#f7f7f7;border-bottom:2px solid #dedede;display:flex;padding:10px 24px 0 30px;font-size:29px;color:#444}
.crumb span{flex:1;letter-spacing:.35px;line-height:40px;margin-top:-1px}
.cx{margin:1px 0 0 47px}
.frame{height:1434px;display:flex;padding-left:82px}
.sheet{width:1964px;display:flex;flex-direction:column}
.ahead{height:168px;background:#efefef;border-bottom:2px solid #c8c8c8;border-radius:6px 6px 0 0;padding:0 20px}
.row1{display:flex;justify-content:space-between;height:80px}
h1{font:bold 24px/80px "DejaVu Sans",Verdana,sans-serif;letter-spacing:-.08px;color:#000}
.score{font:24px/70px "Noto Serif",serif}
.row2{display:flex;padding-left:8px}
.row2 svg{margin:9px auto 0 0}
.btn{height:53px;margin:2px 0 0 16px;border:0;border-radius:9px;background:#0a609c;color:#fff;font:24px "Open Sans",sans-serif;padding:0 13px;width:378px;white-space:nowrap;box-shadow:2px 5px 9px rgba(0,0,0,.3)}
.btn.save{width:80px;background:#737373}
.qa{display:flex;flex:1;border:2px solid #c8c8c8;border-width:0 2px}
.qlist{width:166px;border-right:2px solid #c8c8c8}
h2{font-size:28px;font-weight:600;color:#333}
.qlist h2{height:64px;border-bottom:2px solid #c8c8c8;line-height:68px;padding-left:12px;letter-spacing:.45px}
.qbody{display:flex;height:1202px}
.qs{width:128px}
.q{height:62px;border-bottom:2px solid #c8c8c8;display:flex;align-items:center;justify-content:space-between;padding:0 8px 0 19px;font:24px "Noto Serif",serif}
.q.on{border-left:10px solid #00629f;padding-left:9px}
.q span{padding-top:3px}
.ball{width:22px;height:22px}
.sb{width:34px;background:#f1f1f1;display:flex;flex-direction:column;align-items:center}
.thumb{width:30px;flex:1;background:#c1c1c1}
.sb.main{margin-left:auto}
.sb.main .thumb{flex:none;height:649px}
.dn{margin-top:auto}
.ex{flex:1}
.exh{height:64px;border-bottom:2px solid #c8c8c8;display:flex;align-items:center;padding:0 25px 2px 20px}
.exh h2{flex:1;letter-spacing:.42px;padding-top:7px}
.exh span{font:24px "Noto Serif",serif;margin-right:11px}
.body{padding-left:14px;font:24px "DejaVu Sans",Verdana,sans-serif}
.links{height:102px;display:flex;align-items:center;justify-content:flex-end;gap:32px;padding-right:44px;font:26.400px "Noto Serif",serif;color:#0a6cc0}
.hint{letter-spacing:.5px}
p{line-height:40px;height:40px;white-space:nowrap}
.p1{margin-top:30px}
table{border-collapse:collapse;table-layout:fixed;width:697px;margin:12px 0 0 539px;color:#000}
th,td{height:46px;padding:0;text-align:center;width:158.700px}
th{letter-spacing:.07px}
th:first-child,td:first-child{width:220px;text-align:left;letter-spacing:-.06px}
.p2{margin-top:19px;letter-spacing:.04px}
.m{font:400 30px/0 "Liberation Serif",serif;color:#111;margin:0 2px;-webkit-text-stroke:.7px #111}
.m em{display:inline-block;transform:scaleX(1.2);transform-origin:0 50%;width:28px;margin-left:1px;-webkit-text-stroke:.3px #111}
.m s{text-decoration:none;display:inline-block;width:32px;font-size:36px;-webkit-text-stroke:0}
.p3{margin-top:58px}
.ans{margin-top:29px;color:#000}
.a{height:75px;display:flex;align-items:center;padding-left:10px}
.a label{width:353px;letter-spacing:.26px}
.in{width:120px;height:46px;margin-top:-3px;border:2px solid #c6c6c6;border-radius:6px;box-shadow:0 1px 5px rgba(0,0,0,.35);text-align:right;font-weight:bold;line-height:43px;padding-right:11px;color:#333}
.ok{width:40px;height:40px;margin:-25px 0 0 10px}
.p4{margin-top:8px}
.last{display:flex;margin-top:10px}
.last svg{margin:-8px 0 0 10px}
.focus{margin-top:0;border:4px solid #111;border-radius:8px;padding:4px 8px;display:flex;justify-content:flex-end;box-shadow:0 1px 9px 2px #9fd2f5}
.focus i{width:2px;height:30px;background:#0a7fd0}

.rail{width:112px;background:#575757;display:flex;flex-direction:column}
.help{height:88px;background:#fff;border-bottom:2px solid #dedede;display:flex;align-items:center;justify-content:center}
.apps{padding-top:5px}
.apps span{height:106px;display:flex;align-items:center;padding-left:26px}
.apps svg{width:64px;height:64px}
.az{font:bold 27px "Liberation Serif",serif;text-anchor:middle;fill:#3a2c0c}
.off{font:600 12px "Open Sans",sans-serif;fill:#e2450e}
.on{font:bold 22px "Open Sans",sans-serif;fill:#80397b}
.ap{font:italic 38px "DejaVu Sans",sans-serif;fill:#fff}

.task{height:80px;display:flex;color:#fff;background:linear-gradient(90deg,#411f1f 0,#411f1f 90px,#2c2225 784px,#3b1e1e 1280px,#421f1e 1700px,#382427 2080px,#332528 2350px,#421f20 2560px)}
.start{width:97px;display:flex;align-items:center;justify-content:center;padding-right:1px}
.find{width:687px;background:#f2f2f2;border:2px solid #c0c0c0;border-width:2px 1px 2px 1px;display:flex;align-items:center;padding-left:21px;font-size:28px;color:#2b2b2b}
.find span{margin-left:23px;padding-top:2px}
.ti{width:96px;display:flex;align-items:center;justify-content:center}
.ti.wide{width:108px}
.ti.xl{width:80px;margin:0 10px 0 4px;border-bottom:4px solid #76b9ed}
.xl svg,.chrome svg{margin-top:4px}
.xt{font:bold 16px "Open Sans",sans-serif;fill:#fff;text-anchor:middle}
.chrome{background:linear-gradient(90deg,#60494a 88px,#3b2626 88px,#3b2626 90px,#5a4040 90px);border-bottom:4px solid #76b9ed}
.tray{margin-left:auto;display:flex;align-items:center;font-size:27px;width:757px;height:80px;background:linear-gradient(#8a7575,#8a7575) 747px 0/2px 80px no-repeat}
.cl{margin-top:-2px}
.wx{margin-left:15px;width:55px;letter-spacing:-.8px;padding-top:2px}
.wc{width:86px;letter-spacing:-.1px}
.up{margin-left:58px}
.bt{margin-left:32px}
.od{margin-left:30px}
.sp{margin-left:29px}
.clock{width:119px;margin-left:23px;display:flex;flex-direction:column;align-items:center;font-size:23px;line-height:37px;letter-spacing:-.3px;padding-top:2px}
.note{margin-left:32px;padding-top:15px}
.n3{font:bold 22px "Open Sans",sans-serif;fill:#fff;text-anchor:middle}
```
